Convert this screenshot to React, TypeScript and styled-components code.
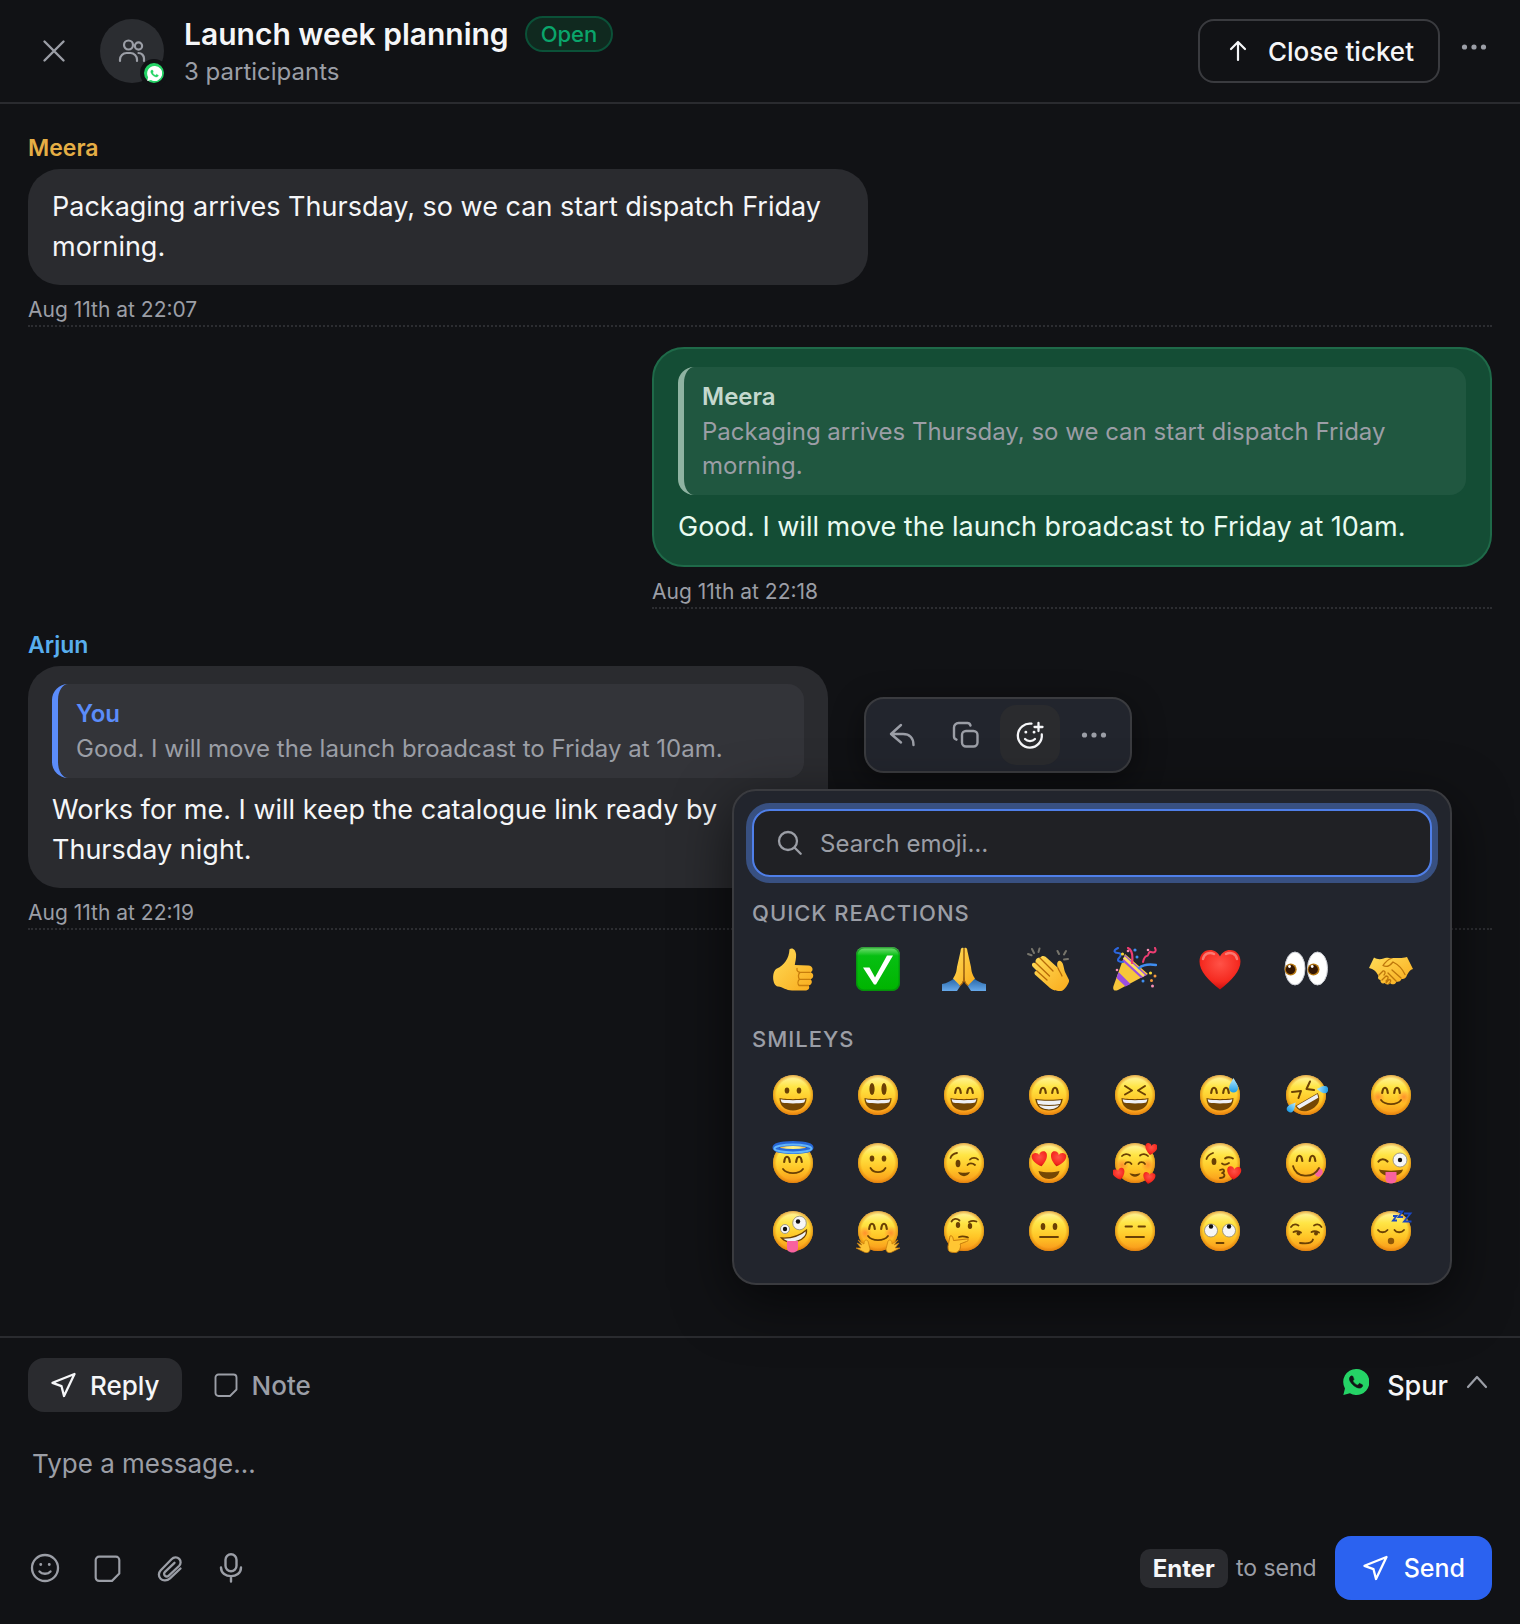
import React from "react";
import styled, { createGlobalStyle, css } from "styled-components";

const color = {
  bg: "#111215",
  line: "#2a2b2f",
  border: "#3a3b3f",
  surface: "#2a2b2f",
  raised: "#22252d",
  text: "#f5f6f8",
  muted: "#9b9ea6",
  blue: "#2b62f0",
  link: "#5b8cfa",
  green: "#25d366",
};

const GlobalStyle = createGlobalStyle`
  * { box-sizing: border-box; }
  body {
    margin: 0;
    background: ${color.bg};
    color: ${color.text};
    font-family: Inter, "Liberation Sans", sans-serif;
    font-size: 26px;
  }
  button, input, textarea { font: inherit; color: inherit; }
  button { padding: 0; border: 0; background: none; cursor: pointer; }
  svg { display: block; flex: none; }
`;

/* ---------- layout ---------- */

const Page = styled.div`
  display: flex;
  flex-direction: column;
  min-height: 100vh;
`;

const Header = styled.header`
  display: flex;
  align-items: center;
  height: 104px;
  padding: 0 28px;
  border-bottom: 2px solid ${color.line};
`;

const IconButton = styled.button<{ $size?: number }>`
  display: grid;
  place-items: center;
  flex: none;
  width: ${(p) => p.$size ?? 52}px;
  height: ${(p) => p.$size ?? 52}px;
  color: ${color.muted};
`;

const Avatar = styled.div`
  position: relative;
  display: grid;
  place-items: center;
  flex: none;
  width: 64px;
  height: 64px;
  margin: 0 20px;
  border-radius: 50%;
  background: #2b2d31;
  color: ${color.muted};
`;

const AvatarBadge = styled.span`
  position: absolute;
  right: -4px;
  bottom: -4px;
  display: grid;
  place-items: center;
  width: 28px;
  height: 28px;
  border: 4px solid ${color.bg};
  border-radius: 50%;
  background: ${color.green};
`;

const Heading = styled.div`
  flex: 1;
  min-width: 0;
  padding-top: 4px;
`;

const TitleRow = styled.div`
  display: flex;
  align-items: center;
  gap: 16px;
  height: 36px;
`;

const Title = styled.h1`
  margin: 0;
  font-size: 30px;
  line-height: 36px;
  font-weight: 600;
`;

const Status = styled.span`
  height: 36px;
  padding: 0 14px;
  border: 2px solid #0b5138;
  border-radius: 18px;
  background: #10291f;
  color: #0aa56b;
  font-size: 22px;
  line-height: 32px;
  font-weight: 500;
`;

const Subtitle = styled.div`
  margin-top: 2px;
  color: ${color.muted};
  font-size: 24px;
  line-height: 36px;
`;

const OutlineButton = styled.button`
  display: flex;
  align-items: center;
  gap: 16px;
  height: 64px;
  padding: 0 24px;
  border: 2px solid ${color.border};
  border-radius: 16px;
  font-weight: 500;
`;

const HeaderMenu = styled(IconButton)`
  margin-left: 16px;
  padding-bottom: 8px;
`;

const Thread = styled.main`
  display: flex;
  flex: 1;
  flex-direction: column;
  gap: 20px;
  padding: 28px 28px 40px;
`;

const Message = styled.article<{ $own?: boolean }>`
  align-self: ${(p) => (p.$own ? "flex-end" : "stretch")};
  width: ${(p) => (p.$own ? "840px" : "auto")};
  max-width: 100%;
`;

const Sender = styled.div<{ $tone: string }>`
  margin-bottom: 5px;
  color: ${(p) => p.$tone};
  font-size: 23px;
  line-height: 32px;
  font-weight: 600;
`;

const BubbleRow = styled.div`
  position: relative;
`;

const Bubble = styled.div<{ $own?: boolean; $width: number }>`
  display: flex;
  flex-direction: column;
  gap: 12px;
  width: ${(p) => p.$width}px;
  max-width: 100%;
  padding: 18px 24px;
  border-radius: 32px;
  background: ${color.surface};
  ${(p) =>
    p.$own &&
    css`
      border: 2px solid #1f6a49;
      background: #144d35;
      color: #e9fbf1;
    `}
`;

const BodyText = styled.p`
  margin: 0;
  font-size: 27px;
  line-height: 40px;
`;

const Quote = styled.blockquote<{ $own?: boolean }>`
  margin: 0;
  padding: 12px 18px;
  border-left: 6px solid ${(p) => (p.$own ? "#8fb3a2" : color.link)};
  border-radius: 16px;
  background: ${(p) => (p.$own ? "#205740" : "#333439")};
  color: ${color.muted};
  font-size: 24px;
  line-height: 34px;
`;

const QuoteName = styled.cite<{ $own?: boolean }>`
  display: block;
  color: ${(p) => (p.$own ? "#c4d8ce" : color.link)};
  font-style: normal;
  font-weight: 600;
  line-height: 36px;
`;

const QuoteText = styled.p`
  margin: 0;
`;

const Time = styled.time`
  display: block;
  margin-top: 10px;
  border-bottom: 2px dotted #2c2d31;
  color: ${color.muted};
  font-size: 21px;
  line-height: 30px;
`;

/* ---------- floating message actions ---------- */

const Actions = styled.div`
  position: absolute;
  top: 31px;
  left: 836px;
  display: flex;
  gap: 4px;
  padding: 6px;
  border: 2px solid ${color.border};
  border-radius: 20px;
  background: ${color.raised};
  box-shadow: 0 8px 32px rgba(0, 0, 0, 0.45);
`;

const Action = styled.button<{ $active?: boolean }>`
  display: grid;
  place-items: center;
  width: 60px;
  height: 60px;
  border-radius: 16px;
  background: ${(p) => (p.$active ? "#2a2b2e" : "transparent")};
  color: ${(p) => (p.$active ? color.text : color.muted)};
`;

const Picker = styled.section`
  position: absolute;
  top: 123px;
  right: 40px;
  z-index: 1;
  width: 720px;
  padding: 18px 18px 20px;
  border: 2px solid ${color.border};
  border-radius: 24px;
  background: ${color.raised};
  box-shadow: 0 16px 56px rgba(0, 0, 0, 0.6);
`;

const SearchBox = styled.label`
  display: flex;
  align-items: center;
  gap: 16px;
  height: 68px;
  margin-bottom: 20px;
  padding: 0 22px;
  border: 2px solid #4f7fe9;
  border-radius: 18px;
  background: #202125;
  box-shadow: 0 0 0 6px #385081;
  color: ${color.muted};
`;

const SearchInput = styled.input`
  flex: 1;
  min-width: 0;
  padding: 0;
  border: 0;
  outline: 0;
  background: none;
  font-size: 24px;
  &::placeholder { color: ${color.muted}; opacity: 1; }
`;

const Group = styled.div`
  & + & { margin-top: 22px; }
`;

const GroupTitle = styled.h2`
  margin: 0 0 8px;
  color: ${color.muted};
  font-size: 22px;
  line-height: 32px;
  font-weight: 500;
  letter-spacing: 1px;
  text-transform: uppercase;
`;

const EmojiGrid = styled.div`
  display: grid;
  grid-template-columns: repeat(8, 1fr);
  gap: 4px;
`;

const EmojiButton = styled.button`
  display: grid;
  place-items: center;
  height: 64px;
  border-radius: 12px;
`;

/* ---------- composer ---------- */

const Composer = styled.footer`
  padding: 20px 28px 24px;
  border-top: 2px solid ${color.line};
`;

const Bar = styled.div`
  display: flex;
  align-items: center;
  justify-content: space-between;
`;

const Cluster = styled.div<{ $gap: number }>`
  display: flex;
  align-items: center;
  gap: ${(p) => p.$gap}px;
`;

const Tab = styled.button<{ $active?: boolean }>`
  display: flex;
  align-items: center;
  gap: 14px;
  height: 54px;
  padding: 0 22px;
  border-radius: 16px;
  background: ${(p) => (p.$active ? color.surface : "transparent")};
  color: ${(p) => (p.$active ? color.text : color.muted)};
  font-weight: 500;
`;

const Channel = styled.button`
  display: flex;
  align-items: center;
  gap: 18px;
  padding-right: 4px;
  font-size: 27px;
  font-weight: 500;
  svg { margin-bottom: 6px; color: ${color.muted}; }
`;

const MessageInput = styled.textarea`
  display: block;
  width: 100%;
  height: 88px;
  margin: 30px 0 6px;
  padding: 2px 4px;
  border: 0;
  outline: 0;
  resize: none;
  background: none;
  line-height: 40px;
  &::placeholder { color: ${color.muted}; opacity: 1; }
`;

const Tools = styled(Cluster)`
  margin-left: -10px;
`;

const Hint = styled.span`
  display: flex;
  align-items: center;
  gap: 8px;
  color: ${color.muted};
  font-size: 23px;
`;

const Key = styled.kbd`
  padding: 0 13px;
  border-radius: 10px;
  background: ${color.surface};
  color: ${color.text};
  font-family: inherit;
  font-size: 24px;
  line-height: 39px;
  font-weight: 700;
`;

const SendButton = styled.button`
  display: flex;
  align-items: center;
  gap: 16px;
  height: 64px;
  padding: 0 27px;
  border-radius: 16px;
  background: ${color.blue};
  color: #fff;
  font-size: 25px;
  font-weight: 500;
`;

/* ---------- icons ---------- */

type IconProps = { size?: number; weight?: number; children: React.ReactNode };

const Icon = ({ size = 24, weight = 2.2, children }: IconProps) => (
  <svg width={size} height={size} viewBox={`0 0 ${size} ${size}`} fill="none" stroke="currentColor" strokeWidth={weight} strokeLinecap="round" strokeLinejoin="round" aria-hidden="true">
    {children}
  </svg>
);

const CloseIcon = () => <Icon weight={2.4}><path d="M2.500 2.500 21.500 21.500M21.500 2.500 2.500 21.500" /></Icon>;
const PeopleIcon = () => (
  <Icon size={28}>
    <circle cx="10.5" cy="8" r="4.5" />
    <circle cx="20.5" cy="9" r="3.6" />
    <path d="M2 24v-1.5A6.5 6.5 0 0 1 8.500 16h4a6.500 6.500 0 0 1 6.500 6.500V24M20.500 16a5.500 5.500 0 0 1 5.500 5.500V24" />
  </Icon>
);
const UpIcon = () => <Icon size={28}><path d="M14 23V5M7 12l7-7 7 7" /></Icon>;
const DotsIcon = () => (
  <svg width="28" height="28" viewBox="0 0 28 28" fill="currentColor" aria-hidden="true">
    <circle cx="4.500" cy="14" r="2.600" /><circle cx="14" cy="14" r="2.600" /><circle cx="23.500" cy="14" r="2.600" />
  </svg>
);
const ReplyIcon = () => <Icon size={28} weight={2.4}><path d="M13 4 3 13l10 8.500M3 13h12c6.500 0 10.500 4 10.500 11" /></Icon>;
const CopyIcon = () => (
  <Icon size={28} weight={2.4}>
    <rect x="10" y="10" width="15.500" height="15.500" rx="4" />
    <path d="M18.500 4.500c-.5-1.500-1.500-2.500-3-2.500H6.500A4.500 4.500 0 0 0 2 6.500v9c0 1.500.6 2.500 2.500 3.200" />
  </Icon>
);
const ReactIcon = () => (
  <Icon size={28} weight={2.3}>
    <path d="M15.500 2.700A12 12 0 1 0 25.800 13.500M22.500 2v8M18.500 6h8M9 18c2.500 2.800 7.500 2.800 10 0" />
    <path d="M9.800 11.200h.1M18 11.200h.1" strokeWidth="2.800" />
  </Icon>
);
const SearchIcon = () => <Icon size={28} weight={2.3}><circle cx="12" cy="12" r="9" /><path d="m18.700 18.700 6 6" /></Icon>;
const PlaneIcon = () => <Icon size={26} weight={2.3}><path d="M24.500 2 2.500 10.800l9 3.400L14 24z" /></Icon>;
const NoteIcon = ({ size = 24 }: { size?: number }) => (
  <svg width={size} height={size} viewBox="0 0 24 24" fill="none" stroke="currentColor" strokeWidth="1.900" strokeLinejoin="round" aria-hidden="true">
    <path d="M4.500 1.500h15a3 3 0 0 1 3 3v12l-6.500 6.500H4.500a3 3 0 0 1-3-3V4.500a3 3 0 0 1 3-3z" />
  </svg>
);
const SmileIcon = () => (
  <Icon size={30} weight={2.3}>
    <circle cx="15" cy="15" r="13" /><path d="M9.500 18.500c2.500 3 8.500 3 11 0" />
    <path d="M10.700 11.500h.1M19.200 11.500h.1" strokeWidth="2.800" />
  </Icon>
);
const ClipIcon = () => (
  <Icon size={28} weight={2.300}>
    <path d="M25.500 14.500 15 24.300c-3 2.700-7 2.900-9.400.5-2.400-2.400-2.200-6.200.2-8.600l10.700-11c2.300-2.300 5.700-2.300 7.700-.3s1.800 5.100-.2 7.100L13.800 21.600c-1.200 1.100-2.800 1.200-3.900.1-1.100-1.100-1-2.700.1-3.800l9.500-9.100" />
  </Icon>
);
const MicIcon = () => (
  <Icon size={30} weight={2.4}>
    <rect x="9.500" y="1.200" width="11" height="17" rx="5.500" /><path d="M5 14.500c0 11.500 20 11.500 20 0M15 23.500V28.500" />
  </Icon>
);
const ChevronIcon = () => <Icon size={22}><path d="M2 16 11 6l9 10" /></Icon>;
const WhatsAppIcon = ({ size, fill, phone }: { size: number; fill: string; phone: string }) => (
  <svg width={size} height={size} viewBox="0 0 24 24" aria-hidden="true">
    <path fill={fill} d="M12 0a12 12 0 1 1-5.600 22.400L.3 24l1.500-6A12 12 0 0 1 12 0z" />
    <path fill={phone} stroke={phone} strokeWidth=".6" d="M17.472 14.382c-.297-.149-1.758-.867-2.030-.967-.273-.099-.471-.148-.67.150-.197.297-.767.966-.94 1.164-.173.199-.347.223-.644.075-.297-.150-1.255-.463-2.390-1.475-.883-.788-1.480-1.761-1.653-2.059-.173-.297-.018-.458.130-.606.134-.133.298-.347.446-.520.149-.174.198-.298.298-.497.099-.198.050-.371-.025-.520-.075-.149-.669-1.612-.916-2.207-.242-.579-.487-.5-.669-.510-.173-.008-.371-.010-.570-.010-.198 0-.520.074-.792.372-.272.297-1.040 1.016-1.040 2.479 0 1.462 1.065 2.875 1.213 3.074.149.198 2.096 3.200 5.077 4.487.709.306 1.262.489 1.694.625.712.227 1.360.195 1.871.118.571-.085 1.758-.719 2.006-1.413.248-.694.248-1.289.173-1.413-.074-.124-.272-.198-.570-.347" />
  </svg>
);

/* ---------- emoji artwork, drawn on a 44 unit square ---------- */

const brown = "#6a4004";
const mouth = "#744704";
const stroke = { fill: "none", stroke: brown, strokeWidth: 1.8, strokeLinecap: "round" as const, strokeLinejoin: "round" as const };

const PaintDefs = styled.svg`
  position: absolute;
  width: 0;
  height: 0;
`;

const Paints = () => (
  <PaintDefs aria-hidden="true">
    <defs>
      <linearGradient id="skin" x1="0" y1="0" x2="0" y2="1">
        <stop offset="0" stopColor="#fff7a8" /><stop offset=".3" stopColor="#ffe545" />
        <stop offset=".65" stopColor="#ffc526" /><stop offset="1" stopColor="#f9951a" />
      </linearGradient>
      <radialGradient id="rim"><stop offset=".82" stopColor="#d97a06" stopOpacity="0" /><stop offset="1" stopColor="#d97a06" stopOpacity=".65" /></radialGradient>
      <radialGradient id="blush"><stop offset="0" stopColor="#ff6a2b" stopOpacity=".6" /><stop offset="1" stopColor="#ff6a2b" stopOpacity="0" /></radialGradient>
      <linearGradient id="hand" x1="0" y1="0" x2="1" y2="1"><stop offset="0" stopColor="#ffdc58" /><stop offset="1" stopColor="#f9ab1c" /></linearGradient>
      <linearGradient id="check" x1="0" y1="0" x2="0" y2="1"><stop offset="0" stopColor="#7be07b" /><stop offset=".2" stopColor="#06bf12" /><stop offset="1" stopColor="#00b400" /></linearGradient>
      <radialGradient id="love" cx=".5" cy=".35" r=".65"><stop offset="0" stopColor="#ff5247" /><stop offset=".7" stopColor="#f52a20" /><stop offset="1" stopColor="#c90d0d" /></radialGradient>
      <linearGradient id="sleeve" x1="0" y1="0" x2="0" y2="1"><stop offset="0" stopColor="#2766a8" /><stop offset="1" stopColor="#67a9ea" /></linearGradient>
      <linearGradient id="drop" x1="0" y1="0" x2="0" y2="1"><stop offset="0" stopColor="#b8ecff" /><stop offset="1" stopColor="#1c9be6" /></linearGradient>
    </defs>
  </PaintDefs>
);

const Head = () => (<><circle cx="22" cy="22" r="20" fill="url(#skin)" /><circle cx="22" cy="22" r="20" fill="url(#rim)" /></>);
const DotEyes = ({ rx = 2.3, ry = 3.1, y = 17.500 }) => (<><ellipse cx="16" cy={y} rx={rx} ry={ry} fill={brown} /><ellipse cx="28" cy={y} rx={rx} ry={ry} fill={brown} /></>);
const HappyEyes = ({ y = 20, dx = 6 }) => (
  <path {...stroke} strokeWidth="2.200" d={`M${19.200 - dx} ${y}c.8-7 4.800-7 5.600 0M${19.200 + dx} ${y}c.8-7 4.800-7 5.600 0`} />
);
const OpenMouth = () => (<><path d="M8.500 25c5 1.500 22 1.500 27 0C35.500 32.500 30.500 37.500 22 37.500S8.500 32.500 8.500 25z" fill={mouth} /><path d="M9.700 26.300c5 1.200 19.600 1.200 24.600 0-.2 1.500-.6 2.400-1.200 3.200-5.500 1.200-16.700 1.200-22.200 0-.6-.8-1-1.700-1.200-3.200z" fill="#eef0f5" /></>);
const Smile = ({ y = 27, w = 8.5 }) => <path {...stroke} d={`M${22 - w} ${y}c${w * 0.4} 5.500 ${w * 1.6} 5.500 ${w * 2} 0`} />;
const Blush = () => (<><circle cx="9" cy="24" r="7" fill="url(#blush)" /><circle cx="35" cy="24" r="7" fill="url(#blush)" /></>);
const HeartShape = ({ x, y, s = 1, r = 0 }: { x: number; y: number; s?: number; r?: number }) => (
  <path transform={`translate(${x} ${y}) rotate(${r}) scale(${s})`} fill="url(#love)" d="M0 6C-8 .5-7-5.500-3.500-5.500-1.500-5.500-.4-4.500 0-3 .4-4.500 1.500-5.500 3.500-5.500 7-5.500 8 .5 0 6z" />
);
const Tongue = ({ x = 22, y = 30, r = 0 }) => <path transform={`translate(${x} ${y}) rotate(${r})`} d="M-5.500 0h11v7c0 6-11 6-11 0z" fill="#f8629f" />;
const Goggle = ({ x, y, r, px = 0, py = 0 }: { x: number; y: number; r: number; px?: number; py?: number }) => (
  <><circle cx={x} cy={y} r={r} fill="#f6f6f6" stroke="#8d8778" strokeWidth=".8" /><circle cx={x + px} cy={y + py} r="2.200" fill="#111" /></>
);
const Drop = ({ x, y, s = 1, r = 0 }: { x: number; y: number; s?: number; r?: number }) => (
  <path transform={`translate(${x} ${y}) rotate(${r}) scale(${s})`} d="M0-8c2 4 4.500 6.500 4.500 10a4.500 4.500 0 0 1-9 0C-4.500-1.500-2-4 0-8z" fill="url(#drop)" />
);
const LaughMouth = () => (
  <g transform="rotate(-30 24 29)"><path d="M11 26h26c-.5 8-6 11-13 11S11.500 34 11 26z" fill={mouth} /><path d="M12 26.800h24l-1 3.700H13z" fill="#eef0f5" /></g>
);

type Art = [name: string, art: React.ReactNode];

const quick: Art[] = [
  ["Thumbs up", <>
    <path fill="url(#hand)" d="M18.500 2.300c2.600-2.200 6.200 0 6.600 5.200.2 4-.8 7-1.300 10.500l13.500.5c5 .2 5.400 5.600 2.400 6.700 3.600 1.300 3.300 6-.3 7 2.400 1.500 1.800 5.600-1.700 6.200 1.500 2.300 0 5-3.700 5.100H21c-6 0-9-3.500-14-4-6-.8-6.500-15.500-1-18C13 18.500 18 12 18.500 2.300z" />
    <path {...stroke} stroke="#c87d0c" strokeWidth="1.300" d="M39 25.300H29c-2-.2-3.500-1.500-3-4M39 32.300H28.500M37.500 38.500H28M29 25.500c-2 1.500-2 5-.5 6.800-1.800 1.700-2 4.500-.5 6.200" />
  </>],
  ["Check mark", <>
    <rect width="44" height="44" rx="8" fill="url(#check)" /><rect x=".7" y=".7" width="42.600" height="42.600" rx="7.500" fill="none" stroke="#087c12" strokeOpacity=".6" strokeWidth="1.400" />
    <path d="M7 20.500h6.500l5.500 10L31 8.500h6L20 37.500h-2z" fill="#fff" />
  </>],
  ["Folded hands", <>
    <path d="M0 37c5-.5 9-3.500 12-5.500l7 6.500-4 6H0z" fill="url(#sleeve)" /><path d="M44 37c-5-.5-9-3.500-12-5.500L25 38l4 6h15z" fill="url(#sleeve)" />
    <path fill="url(#hand)" d="M21.600 1c-2-1-3 .5-3 3L15 20c-.5 4.500-1 7-4 11.500l7 7c3.500-3 3.600-6.500 3.600-12zM22.400 1c2-1 3 .5 3 3L29 20c.5 4.500 1 7 4 11.500l-7 7c-3.500-3-3.600-6.500-3.600-12z" />
    <path {...stroke} stroke="#b66a08" strokeWidth="1.200" d="M22 2v28c0 4-1.500 7-4 8.500M22 30c0 4 1.500 7 4 8.500" />
  </>],
  ["Clapping hands", <>
    <path {...stroke} stroke="#77756c" strokeWidth="2" d="M1 7l3.500 1.300M5 2l2 4M12.500 1.500l-1 3.500M30.500 4l1.500 3M39 4l-2 3.500M41 12l-4 .5" />
    <path fill="url(#hand)" d="M13 11c2-3 5-2 7 0l11 10c-2-5 0-8 2.500-7 3 1.500 3 6 4.500 11l4 8c1 2.500-5 11-8 11-3.500 0-7 0-11-3L9 28.500c-3-2.500-1-5 1-4.500l-4-4c-2.500-3 0-5.500 3-3.800-1.500-3 1-6 4-5.200z" />
    <path {...stroke} stroke="#b66a08" strokeWidth="1.300" d="m13 11 13 13M9 16l13.500 13M10 24l10 9M31 21c1 3 3 5 4 8" />
  </>],
  ["Party popper", <>
    <path d="M12 7 35 27 5 43c-4 1.500-5.500-.5-4.500-4z" fill="#f7c73b" />
    <path d="m9.500 14 18.500 17 6-3L12 8zM5.500 25 17.500 37l-5 2.500-9-8.500z" fill="#9b4fe0" /><path d="m11 10.500 20 18.500" stroke="#ffdf60" strokeWidth="3" />
    <path d="M15 1c4 2 5 8 4 15" {...stroke} stroke="#ef3d72" strokeWidth="2.200" /><path d="M5 1C-1 4 2 6 5 6s4 2 1 5 1 4 4 4" {...stroke} stroke="#2c67e0" strokeWidth="2" />
    <path d="M42 1c2 4-1 5-4 4s-2 4-4 4-3 2-4 6" {...stroke} stroke="#ef3d72" strokeWidth="2" /><path d="M26 21c5-4 11-4 17-3" {...stroke} stroke="#3f8ef0" strokeWidth="2.400" />
    <g fill="#3f8ef0"><circle cx="22" cy="3" r="1.600" /><circle cx="24" cy="10" r="1.500" /><circle cx="30" cy="34" r="1.500" /></g>
    <g fill="#f6d638"><circle cx="9.500" cy="7" r="1.600" /><circle cx="37.500" cy="26" r="1.600" /></g><g fill="#f79a3b"><circle cx="42" cy="29" r="1.500" /><circle cx="38.500" cy="33.500" r="1.500" /></g>
    <g fill="#f78fb5"><circle cx="15" cy="4" r="1.300" /><circle cx="35" cy="3" r="1.300" /><circle cx="39.500" cy="39" r="1.500" /><circle cx="4" cy="23" r="1.300" /></g>
  </>],
  ["Red heart", <>
    <path fill="url(#love)" d="M22 42.500C10 33 1.500 24 1.500 14.500 1.500 7.500 6 3 12 3c4.500 0 8 2.400 10 6.500C24 5.400 27.500 3 32 3c6 0 10.500 4.500 10.500 11.500C42.500 24 34 33 22 42.500z" />
    <path d="M5 12c1-5 6-7.500 11-5M28 7c5-2.500 10 0 11 5" fill="none" stroke="#ffaaa4" strokeOpacity=".6" strokeWidth="2.500" strokeLinecap="round" />
  </>],
  ["Eyes", <>
    <ellipse cx="11" cy="21.500" rx="10" ry="16.500" fill="#fff" stroke="#c9ccd2" /><ellipse cx="33.500" cy="21.500" rx="10" ry="16.500" fill="#fff" stroke="#c9ccd2" />
    <circle cx="6.700" cy="22.500" r="6" fill="#b87912" /><circle cx="29.500" cy="22.500" r="6" fill="#b87912" />
    <circle cx="6.500" cy="22.500" r="4.700" fill="#351703" /><circle cx="29.200" cy="22.500" r="4.700" fill="#351703" /><circle cx="5.500" cy="19.500" r="1.400" fill="#fff" /><circle cx="28.200" cy="19.500" r="1.400" fill="#fff" />
  </>],
  ["Handshake", <>
    <path fill="url(#hand)" d="M5 10.500c3 2 6.500 2 9.500 1 3-1.500 6 0 7.500 0 5-1.500 9 .5 16-1.500l6 12c-3 .5-4 3-6 6-1 4-4 4-5.500 4-1 3-4 3-5 2.500-1 3.500-5 3.500-6.500 1.500-2 2.800-5 1-5 0-3 1.500-5-1-4.500-3-2.500-.5-3-2.500-2-4-2.500-5-5-7-9.500-8z" />
    <path {...stroke} stroke="#bd760b" strokeWidth="1.300" d="M22 11.500c-4 1.500-6 4-8 7 4 2.500 8-1 10-3.500 4 2 9 6 12 12.500M23 23l9 8M19 26l8 8M10 28l4-4c2-.5 3 2 1 4M13 33l4-4c3 0 2.500 3 0 5M17 36l3-3.500c2.500 0 2 2.500 0 4" />
  </>],
];

const smileys: Art[] = [
  ["Grinning face", <><Head /><DotEyes /><OpenMouth /></>],
  ["Grinning face with big eyes", <><Head /><DotEyes ry={6} y={16} rx={2.6} /><OpenMouth /></>],
  ["Grinning face with smiling eyes", <><Head /><HappyEyes /><OpenMouth /></>],
  ["Beaming face", <><Head /><HappyEyes /><path d="M9 26.500c5 1 21 1 26 0-1 6.500-5 10.500-13 10.500S10 33 9 26.500z" fill="#eef0f5" stroke={brown} strokeWidth="1.200" /><path d="M11 31.500c6 1.300 16 1.300 22 0" fill="none" stroke={brown} /></>],
  ["Squinting face", <><Head /><path {...stroke} strokeWidth="2" d="m12 13 7 4.500-7 4M32 13l-7 4.500 7 4" /><OpenMouth /></>],
  ["Grinning face with sweat", <><Head /><HappyEyes /><OpenMouth /><Drop x={35.500} y={13} /></>],
  ["Rolling on the floor laughing", <><Head /><path {...stroke} strokeWidth="2" d="m8 19 9-1-2.500 7M26 8.500 22.500 16l7.500 1" /><LaughMouth /><Drop x={39} y={16.500} s={0.8} r={-85} /><Drop x={7.500} y={34.500} s={0.8} r={40} /></>],
  ["Smiling face", <><Head /><Blush /><HappyEyes /><Smile w={10} /></>],
  ["Smiling face with halo", <><Head /><HappyEyes y={21} /><Smile y={28} w={10} /><ellipse cx="22" cy="6.500" rx="18" ry="4" fill="none" stroke="#2768d8" strokeWidth="5" /><ellipse cx="22" cy="7.500" rx="18.500" ry="4" fill="none" stroke="#63b5fa" strokeWidth="2" /></>],
  ["Slightly smiling face", <><Head /><DotEyes /><Smile w={7.5} /></>],
  ["Winking face", <><Head /><path {...stroke} d="M8.500 17c1-3.500 3.500-4.500 6.500-5M28 18.500c2-2.200 6-2.200 8 0M25.500 24c1.500-2.200 5-2.200 7.500 0" /><ellipse cx="16" cy="22.500" rx="2.400" ry="3.700" fill={brown} /><path d="M16 31c3 1 9 1 12 0-2 5.500-10 5.500-12 0z" fill={brown} /></>],
  ["Heart eyes", <><Head /><path d="M11.500 30c6 1.800 15 1.800 21 0-2 10.500-19 10.500-21 0z" fill={mouth} /><HeartShape x={13} y={18} s={1.25} r={-12} /><HeartShape x={31} y={18} s={1.25} r={12} /></>],
  ["Face with hearts", <><Head /><Blush /><path {...stroke} d="M9 15c2-2.500 6-2.500 8-.5M27 14.500c2-2 6-2 8 .5M12 23c1-2.500 5-2.500 6.500 0M25.500 23c1-2.500 5-2.500 6.500 0" /><path d="M16.500 32c3 1.500 8 1.500 11 0-2 5-9 5-11 0z" fill={brown} /><HeartShape x={38} y={8} r={10} /><HeartShape x={6} y={33} r={-15} /><HeartShape x={36} y={37} r={10} /></>],
  ["Face blowing a kiss", <><Head /><path {...stroke} d="M8.500 18c1-4 3.500-5 6.500-6M27 17.500c2-1.800 6-1.500 8 0M24 22.500c2 1.500 5 1 7-.5M22 29c5-2 5 2 2 3 4 1 3 5-2 5" /><ellipse cx="16" cy="20.500" rx="2.400" ry="3.500" fill={brown} /><HeartShape x={36} y={32} s={1.150} r={5} /></>],
  ["Face savoring food", <><Head /><path d="m30 31 5-4.500c4 1.500 5 5 2 8s-6 .5-7-3.500z" fill="#f8629f" /><HappyEyes dx={6.5} /><path {...stroke} d="M9 25c3 12 20 13 26 2" /></>],
  ["Winking face with tongue", <><Head /><path {...stroke} strokeWidth="2.200" d="M9.500 20.500c2-3 6.500-3 9 0" /><Goggle x={31} y={19} r={7} /><path d="M10 28.500c6 1.500 18 1.500 24 0-2 9-22 9-24 0z" fill={mouth} /><Tongue y={31} /></>],
  ["Zany face", <><Head /><Goggle x={14} y={20} r={4.5} /><Goggle x={28.500} y={14} r={6.8} px={-1.5} py={-1.5} /><path d="M10.500 29c9 .5 17-1 25-8 1 11-17 16-25 8z" fill="#eef0f5" stroke={brown} strokeWidth="1.300" /><Tongue y={32} x={21.500} /></>],
  ["Hugging face", <><Head /><Blush /><HappyEyes /><Smile w={10} /><path d="M1 34l5 2-4-5 6 4c0-4 2-5 4-3l2 8c0 3-3 5-6 3l-4-2-4-2 5 0zM43 34l-5 2 4-5-6 4c0-4-2-5-4-3l-2 8c0 3 3 5 6 3l4-2 4-2-5 0z" fill="#fec335" stroke="#c87d0c" strokeWidth=".7" /></>],
  ["Thinking face", <><Head /><path {...stroke} d="M9.500 12.500c1.500-3 5.500-3.500 8-1M27 13c2.500-1.500 5-1.500 7.500-.5M17 28c4-1.500 6-.5 9 .5" /><ellipse cx="16" cy="16" rx="2.200" ry="3" fill={brown} /><ellipse cx="28" cy="17" rx="2.200" ry="3" fill={brown} /><path d="M8 27c2-1 3 1 3.500 4.500l13.500-1.500c2 0 1.500 2-.5 2.500L18 35c1 1 1 7-4 8.500-7 0-8-1-8-6z" fill="#ffc633" stroke="#c87d0c" strokeWidth="1" /></>],
  ["Neutral face", <><Head /><DotEyes ry={3.6} /><path {...stroke} d="M13 28h18" /></>],
  ["Expressionless face", <><Head /><path {...stroke} d="M12.500 17.500h6.500M25.500 17.500H32M13 28h18" /></>],
  ["Face with rolling eyes", <><Head /><Goggle x={13} y={21.500} r={6.5} py={-4} /><Goggle x={31} y={21.500} r={6.5} py={-4} /><path {...stroke} d="M18.500 34h7" /></>],
  ["Smirking face", <><Head /><path {...stroke} d="M7 18c2-3 5-3 7.500-1.500M30 16.500c2.500-1.500 5.500-1.500 7.500 1.500M9.500 23c3-1.500 5-.8 7.500.500M27.500 23c3-1.500 5-.8 7.500.500M16 34c7 1 12 0 13-3.500" /><circle cx="14.500" cy="24.500" r="2" fill={brown} /><circle cx="32" cy="24.500" r="2" fill={brown} /></>],
  ["Sleeping face", <><Head /><path {...stroke} d="M9 21c2 3 7 3 9.500 0M25.500 21c2 3 7 3 9.500 0" /><circle cx="22" cy="32" r="3.200" fill="#8e5707" /><path fill="none" stroke="#1b49c4" strokeWidth="1.800" d="M24 7h3.500L24 11.500h4M29 2.500h4.500L29.500 8h4.500M35 4.500h6.500l-6.500 8h7.500" /></>],
];

const EmojiGroup = ({ title, items }: { title: string; items: Art[] }) => (
  <Group>
    <GroupTitle>{title}</GroupTitle>
    <EmojiGrid>
      {items.map(([name, art]) => (
        <EmojiButton key={name} type="button" aria-label={name}>
          <svg width="44" height="44" viewBox="0 0 44 44" aria-hidden="true">{art}</svg>
        </EmojiButton>
      ))}
    </EmojiGrid>
  </Group>
);

const EmojiPicker = () => (
  <Picker aria-label="Emoji picker">
    <SearchBox>
      <SearchIcon />
      <SearchInput type="text" aria-label="Search emoji" placeholder="Search emoji…" />
    </SearchBox>
    <EmojiGroup title="Quick reactions" items={quick} />
    <EmojiGroup title="Smileys" items={smileys} />
  </Picker>
);

const MessageActions = () => (
  <Actions role="toolbar" aria-label="Message actions">
    <Action type="button" aria-label="Reply"><ReplyIcon /></Action>
    <Action type="button" aria-label="Copy"><CopyIcon /></Action>
    <Action type="button" aria-label="Add reaction" $active><ReactIcon /></Action>
    <Action type="button" aria-label="More"><DotsIcon /></Action>
  </Actions>
);

export default function App() {
  return (
    <Page>
      <GlobalStyle />
      <Paints />
      <Header>
        <IconButton type="button" aria-label="Close"><CloseIcon /></IconButton>
        <Avatar>
          <PeopleIcon />
          <AvatarBadge><WhatsAppIcon size={15} fill="#fff" phone={color.green} /></AvatarBadge>
        </Avatar>
        <Heading>
          <TitleRow>
            <Title>Launch week planning</Title>
            <Status>Open</Status>
          </TitleRow>
          <Subtitle>3 participants</Subtitle>
        </Heading>
        <OutlineButton type="button"><UpIcon />Close ticket</OutlineButton>
        <HeaderMenu type="button" $size={36} aria-label="More options"><DotsIcon /></HeaderMenu>
      </Header>

      <Thread>
        <Message>
          <Sender $tone="#e5ae45">Meera</Sender>
          <Bubble $width={840}>
            <BodyText>Packaging arrives Thursday, so we can start dispatch Friday morning.</BodyText>
          </Bubble>
          <Time>Aug 11th at 22:07</Time>
        </Message>

        <Message $own>
          <Bubble $own $width={840}>
            <Quote $own>
              <QuoteName $own>Meera</QuoteName>
              <QuoteText>Packaging arrives Thursday, so we can start dispatch Friday morning.</QuoteText>
            </Quote>
            <BodyText>Good. I will move the launch broadcast to Friday at 10am.</BodyText>
          </Bubble>
          <Time>Aug 11th at 22:18</Time>
        </Message>

        <Message>
          <Sender $tone="#58aeee">Arjun</Sender>
          <BubbleRow>
            <Bubble $width={800}>
              <Quote>
                <QuoteName>You</QuoteName>
                <QuoteText>Good. I will move the launch broadcast to Friday at 10am.</QuoteText>
              </Quote>
              <BodyText>Works for me. I will keep the catalogue link ready by Thursday night.</BodyText>
            </Bubble>
            <MessageActions />
            <EmojiPicker />
          </BubbleRow>
          <Time>Aug 11th at 22:19</Time>
        </Message>
      </Thread>

      <Composer>
        <Bar>
          <Cluster $gap={10} role="tablist" aria-label="Composer mode">
            <Tab type="button" role="tab" aria-selected="true" $active><PlaneIcon />Reply</Tab>
            <Tab type="button" role="tab" aria-selected="false"><NoteIcon />Note</Tab>
          </Cluster>
          <Channel type="button">
            <WhatsAppIcon size={26} fill={color.green} phone={color.bg} />
            Spur
            <ChevronIcon />
          </Channel>
        </Bar>
        <MessageInput aria-label="Message" placeholder="Type a message…" />
        <Bar>
          <Tools $gap={8}>
            <IconButton type="button" $size={54} aria-label="Emoji"><SmileIcon /></IconButton>
            <IconButton type="button" $size={54} aria-label="Note"><NoteIcon size={27} /></IconButton>
            <IconButton type="button" $size={54} aria-label="Attach file"><ClipIcon /></IconButton>
            <IconButton type="button" $size={54} aria-label="Record audio"><MicIcon /></IconButton>
          </Tools>
          <Cluster $gap={18}>
            <Hint><Key>Enter</Key>to send</Hint>
            <SendButton type="button"><PlaneIcon />Send</SendButton>
          </Cluster>
        </Bar>
      </Composer>
    </Page>
  );
}
